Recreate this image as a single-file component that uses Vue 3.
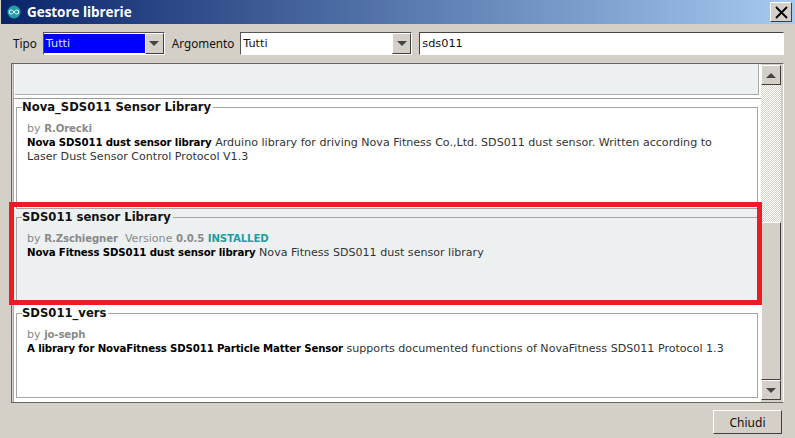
<script setup>
const rows = [
  { name: 'Nova_SDS011 Sensor Library', author: 'R.Orecki', strong: 'Nova SDS011 dust sensor library', text: 'Arduino library for driving Nova Fitness Co.,Ltd. SDS011 dust sensor. Written according to Laser Dust Sensor Control Protocol V1.3', height: 110 },
  { name: 'SDS011 sensor Library', author: 'R.Zschiegner', version: '0.0.5', strong: 'Nova Fitness SDS011 dust sensor library', text: 'Nova Fitness SDS011 dust sensor library', height: 96, shaded: true },
  { name: 'SDS011_vers', author: 'jo-seph', strong: 'A library for NovaFitness SDS011 Particle Matter Sensor', text: 'supports documented functions of NovaFitness SDS011 Protocol 1.3', height: 93 }
]
</script>

<template>
  <div class="window">
    <header class="titlebar">
      <span class="logo">
        <svg width="14" height="14" viewBox="0 0 14 14">
          <circle cx="7" cy="7" r="6.5" fill="#1f9ea3" />
          <path d="M7 7c-1-1.600-2-2-2.800-2a2 2 0 0 0 0 4C5 9 6 8.600 7 7c1-1.600 2-2 2.800-2a2 2 0 0 1 0 4C9 9 8 8.600 7 7z" fill="none" stroke="#fff" stroke-width="1" />
        </svg>
      </span>
      <span class="title">Gestore librerie</span>
      <button class="close" aria-label="Chiudi">
        <svg width="13" height="13" viewBox="0 0 13 13"><path d="M1 1l11 11M12 1L1 12" stroke="#000" stroke-width="1.800" /></svg>
      </button>
    </header>

    <div class="filters">
      <label class="label">Tipo</label>
      <div class="combo combo-type">
        <span class="combo-value selected">Tutti</span>
        <span class="combo-arrow"><i class="tri-down"></i></span>
      </div>
      <label class="label label-topic">Argomento</label>
      <div class="combo combo-topic">
        <span class="combo-value">Tutti</span>
        <span class="combo-arrow"><i class="tri-down"></i></span>
      </div>
      <div class="search">sds011</div>
    </div>

    <div class="list-frame">
      <div class="list">
        <div class="row-clipped"></div>
        <div class="rule"></div>
        <div v-for="r in rows" :key="r.name" class="row" :class="{ shaded: r.shaded }" :style="{ height: r.height + 'px' }">
          <fieldset class="group">
            <legend class="group-title">{{ r.name }}</legend>
            <p class="meta">
              by <b>{{ r.author }}</b>
              <template v-if="r.version">&nbsp; Versione <b>{{ r.version }}</b> <b class="installed">INSTALLED</b></template>
            </p>
            <p class="desc"><b>{{ r.strong }}</b> {{ r.text }}</p>
          </fieldset>
        </div>
      </div>
      <div class="scrollbar">
        <span class="sb-btn"><i class="tri-up"></i></span>
        <span class="sb-track"></span>
        <span class="sb-thumb"></span>
        <span class="sb-btn"><i class="tri-down"></i></span>
      </div>
      <div class="highlight"></div>
    </div>

    <footer class="footer">
      <button class="btn">Chiudi</button>
    </footer>
  </div>
</template>

<style>
html, body { margin: 0; background: #d4d0c8; }
</style>

<style scoped>
.window {
  width: 795px;
  height: 438px;
  box-sizing: border-box;
  padding-left: 1px;
  background: #d4d0c8;
  display: flex;
  flex-direction: column;
  overflow: hidden;
  font-family: "Noto Sans", sans-serif;
  color: #111;
}
.titlebar {
  height: 24px;
  flex: none;
  display: flex;
  align-items: center;
  padding: 0 3px 0 6px;
  background: linear-gradient(90deg, #0a246a, #a6caf0);
}
.logo { display: flex; width: 14px; height: 14px; }
.title {
  margin-left: 6px;
  font-family: "Open Sans", sans-serif;
  font-size: 13.500px;
  font-weight: 700;
  letter-spacing: -0.050px;
  color: #fff;
}
.close {
  margin-left: auto;
  width: 22px;
  height: 20px;
  padding: 0;
  display: flex;
  align-items: center;
  justify-content: center;
  background: #d4d0c8;
  border: 1px solid;
  border-color: #fff #404040 #404040 #fff;
}
.filters {
  height: 39px;
  flex: none;
  box-sizing: border-box;
  padding: 8px 11px 0 12px;
  display: flex;
  align-items: flex-start;
}
.label { font-size: 11.700px; line-height: 23px; }
.label-topic { margin-left: 7px; }
.combo {
  height: 23px;
  box-sizing: border-box;
  display: flex;
  background: #fff;
  border: 1px solid;
  border-color: #555 #fff #fff #555;
  font-family: "DejaVu Sans", sans-serif;
}
.combo-type { width: 122px; margin-left: 6px; }
.combo-topic { width: 172px; margin-left: 6px; }
.combo-value { flex: 1; padding: 1px 0 0 2px; font-size: 11.300px; line-height: 20px; }
.combo-value.selected { background: #0000ff; color: #d8e4f8; margin: 1px 0; padding-top: 0; line-height: 20px; height: 19px; }
.combo-arrow {
  width: 19px;
  box-sizing: border-box;
  display: flex;
  align-items: center;
  justify-content: center;
  background: #d4d0c8;
  border: 1px solid;
  border-color: #fff #404040 #404040 #fff;
}
.tri-down, .tri-up {
  width: 0;
  height: 0;
  border-left: 5px solid transparent;
  border-right: 5px solid transparent;
}
.tri-down { border-top: 5px solid #444; }
.tri-up { border-bottom: 5px solid #444; }
.search {
  margin-left: 7px;
  flex: 1;
  height: 23px;
  box-sizing: border-box;
  padding: 1px 0 0 2px;
  background: #fff;
  border: 1px solid;
  border-color: #444 #fff #fff #444;
  font-family: "DejaVu Sans", sans-serif;
  font-size: 11.300px;
  line-height: 20px;
}
.list-frame {
  position: relative;
  width: 773px;
  height: 340px;
  flex: none;
  margin-left: 10px;
  box-sizing: border-box;
  display: flex;
  padding: 0 2px 0 1px;
  border: 1px solid;
  border-color: #666 #fff #666 #666;
}
.list {
  width: 747px;
  background: #fff;
  border-left: 1px solid #aaa;
  font-family: "DejaVu Sans", sans-serif;
}
.row-clipped { height: 30px; margin-left: 1px; margin-right: 2px; background: #ecf0f1; border-bottom: 1px solid #aaa; border-right: 1px solid #aaa; }
.rule { height: 4px; border-bottom: 1px solid #999; box-sizing: border-box; }
.row {
  box-sizing: border-box;
  padding: 0 3px 0 2px;
  background: #fff;
}
.row.shaded { background: #ecf0f1; }
.group {
  height: 100%;
  box-sizing: border-box;
  margin: 0;
  padding: 0 0 0 10px;
  min-width: 0;
  border: 1px solid #a6a6a6;
}
.group-title {
  margin-left: -5px;
  padding: 0 2px 0 0;
  font-family: "DejaVu Sans Condensed", "DejaVu Sans", sans-serif;
  font-stretch: condensed;
  font-size: 12.900px;
  line-height: 16px;
  font-weight: 700;
  color: #111;
}
.meta, .desc { margin: 0; font-size: 11.080px; line-height: 14px; }
.meta { margin-top: 7px; color: #8a8a8a; }
.meta b, .desc b { font-size: 10.200px; letter-spacing: -0.150px; }
.desc { color: #333; padding-right: 25px; }
.desc b { color: #000; }
.meta .installed { color: #1f9ea3; }
.scrollbar {
  width: 20px;
  margin: 1px 0 2px;
  display: flex;
  flex-direction: column;
}
.sb-btn {
  height: 20px;
  flex: none;
  box-sizing: border-box;
  display: flex;
  align-items: center;
  justify-content: center;
  background: #d4d0c8;
  border: 1px solid;
  border-color: #fff #404040 #404040 #fff;
}
.sb-track {
  height: 137px;
  flex: none;
  background: repeating-conic-gradient(#d4d0c8 0 25%, #fff 0 50%) 0 0 / 2px 2px;
}
.sb-thumb {
  flex: 1;
  background: #d4d0c8;
  border: 1px solid;
  border-color: #fff #404040 #404040 #fff;
}
.highlight {
  position: absolute;
  left: -3px;
  top: 138px;
  width: 753px;
  height: 103px;
  box-sizing: border-box;
  border: 5px solid #ed1c24;
  pointer-events: none;
}
.footer {
  flex: 1;
  display: flex;
  justify-content: flex-end;
  align-items: flex-start;
  padding: 7px 13px 0 0;
}
.btn {
  width: 69px;
  height: 24px;
  padding: 0;
  background: #d4d0c8;
  border: 1px solid;
  border-color: #fff #404040 #404040 #fff;
  font-family: "Noto Sans", sans-serif;
  font-size: 12px;
  color: #111;
}
</style>
